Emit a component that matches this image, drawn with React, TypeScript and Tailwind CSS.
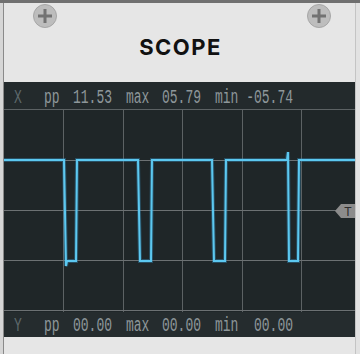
import React from "react";

function Screw() {
  return (
    <svg width="24" height="24" viewBox="0 0 24 24">
      <circle cx="12" cy="12" r="11.5" fill="#bdbdbd" stroke="#a6a6a6" strokeWidth="1" />
      <path d="M12 5 V19 M5 12 H19" stroke="#727272" strokeWidth="3" strokeLinecap="butt" />
    </svg>
  );
}

function Readout({ label, a, b, c }: { label: string; a: string; b: string; c: string }) {
  return (
    <div className="flex items-center pl-[10px] text-[13px] leading-none whitespace-pre text-[#8e979a] scale-y-[1.5]" style={{ fontFamily: '"Liberation Mono", monospace' }}>
      <span className="w-[30px] text-[#5d686b]">{label}</span>
      <span className="w-[29px]">pp</span>
      <span className="w-[53px]">{a}</span>
      <span className="w-[36px]">max</span>
      <span className="w-[53px]">{b}</span>
      <span className="w-[31px]">min</span>
      <span className="w-[47px] text-right">{c}</span>
    </div>
  );
}

function Plot() {
  const vx = [59.5, 119.5, 178.5, 238.5, 297.5];
  const hy = [50.5, 100.5, 150.5, 200.5];
  const d =
    "M0,50 H60 L62,156 L63,151 H72 L73,50 H134 L136,151 H147 L148,50 H208 L210,151 H221 L222,50 H283 L284,42 L285,151 H294 L295,50 H360";
  return (
    <svg width="351" height="202" viewBox="0 0 351 202" className="block">
      {vx.map((x) => (
        <line key={x} x1={x} y1={0} x2={x} y2={202} stroke="#5c6264" strokeWidth="1" />
      ))}
      {hy.map((y) => (
        <line key={y} x1={0} y1={y} x2={351} y2={y} stroke="#6c7173" strokeWidth="1" />
      ))}
      <path d={d} fill="none" stroke="#3a9fd0" strokeOpacity="0.35" strokeWidth="4" />
      <path d={d} fill="none" stroke="#5cc8f0" strokeWidth="2" />
      <polygon points="331,101 337,94 351,94 351,108 337,108" fill="#8c8c8c" />
      <text x="344" y="106" fontSize="12" fontFamily="Liberation Sans, sans-serif" fill="#2c2c2c" textAnchor="middle">T</text>
    </svg>
  );
}

export default function App() {
  return (
    <div className="w-[360px] h-[354px] bg-[#e6e6e6] border-t-[3px] border-[#707070] flex overflow-hidden">
      <div className="w-[3px] bg-[#d6d6d6]" />
      <div className="w-[1px] bg-[#8a8a8a]" />
      <div className="w-[351px] flex flex-col">
        <div className="h-[79px] flex flex-col">
          <div className="flex justify-between pt-[1px] pl-[29px] pr-[24px]">
            <Screw />
            <Screw />
          </div>
          <div
            className="mt-[8px] text-center text-[22px] leading-[22px] font-bold tracking-[1.5px] text-[#111] pl-[2px]"
            style={{ fontFamily: 'Inter, "Noto Sans", sans-serif' }}
          >
            SCOPE
          </div>
        </div>
        <div className="bg-[#1f2628] flex flex-col">
          <div className="h-[28px] bg-[#232a2c] border-b border-[#5c6264] flex items-center">
            <div className="translate-y-[2px] w-full">
              <Readout label="X" a="11.53" b="05.79" c="-05.74" />
            </div>
          </div>
          <Plot />
          <div className="h-[25px] bg-[#252c2e] flex items-center">
            <div className="translate-y-[1px] w-full">
              <Readout label="Y" a="00.00" b="00.00" c="00.00" />
            </div>
          </div>
        </div>
        <div className="flex-1" />
      </div>
      <div className="w-[1px] bg-[#c4c4c4]" />
      <div className="flex-1 bg-[#e2e2e2]" />
    </div>
  );
}
